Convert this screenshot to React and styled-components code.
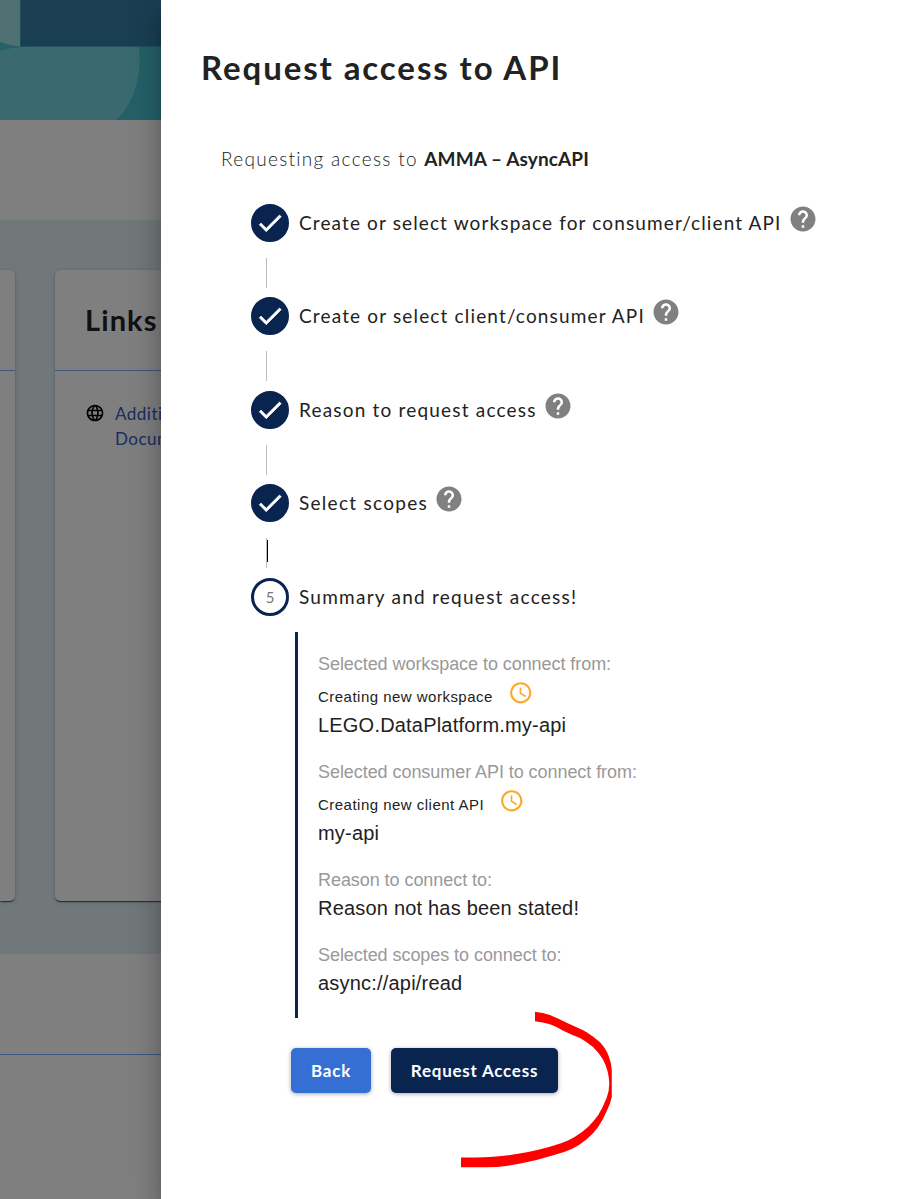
import React from "react";
import styled, { createGlobalStyle } from "styled-components";

const brandFont = '"Lato", "Open Sans", sans-serif';
const plainFont = '"Liberation Sans", Arial, sans-serif';
const navy = "#0a2450";

const GlobalStyle = createGlobalStyle`
  * { box-sizing: border-box; }
  body { margin: 0; background: #fff; font-family: ${brandFont}; color: #222; }
`;

const Screen = styled.div`
  position: relative;
  width: 907px;
  height: 1199px;
  overflow: hidden;
`;

/* Page behind the drawer */
const Page = styled.main`
  display: flex;
  flex-direction: column;
  height: 100%;
  background: #fff;
`;
const Banner = styled.svg`
  display: block;
  flex: none;
  width: 907px;
  height: 120px;
`;
const Band = styled.section`
  display: flex;
  gap: 40px;
  height: 734px;
  margin-top: 100px;
  padding: 50px 40px 53px 0;
  background: #e0f1f3;
`;
const Card = styled.article`
  flex: ${(p) => (p.$wide ? 1 : "none")};
  width: ${(p) => (p.$wide ? "auto" : "15px")};
  background: #fff;
  border-radius: ${(p) => (p.$wide ? "5px" : "0 5px 5px 0")};
  box-shadow: 0 2px 1px -1px rgba(0, 0, 0, 0.4), 0 1px 1px rgba(0, 0, 0, 0.3), 0 1px 4px rgba(0, 0, 0, 0.2);
`;
const CardHeader = styled.header`
  height: 101px;
  padding-top: 29px;
  border-bottom: 1px solid #78acff;
`;
const CardTitle = styled.h2`
  margin: 0 30px;
  font-size: 29px;
  line-height: 41px;
  font-weight: 700;
  letter-spacing: 1.1px;
`;
const LinkRow = styled.div`
  display: flex;
  gap: 10px;
  width: 190px;
  padding: 30px 0 0 30px;
`;
const PageLink = styled.a`
  font-size: 17px;
  line-height: 25px;
  font-weight: 400;
  letter-spacing: 0.5px;
  color: #345cc0;
`;
const GlobeIcon = styled.svg`
  flex: none;
  width: 20px;
  height: 20px;
  margin-top: 2px;
`;
const Footer = styled.footer`
  margin-top: 100px;
  border-top: 1px solid #78acff;
`;
const Backdrop = styled.div`
  position: absolute;
  inset: 0;
  background: rgba(0, 0, 0, 0.5);
`;

/* Drawer */
const Drawer = styled.aside`
  position: absolute;
  inset: 0 0 0 161px;
  padding: 44px 40px 0 40px;
  background: #fff;
  box-shadow: 0 8px 10px -5px rgba(0, 0, 0, 0.2), 0 16px 24px 2px rgba(0, 0, 0, 0.14),
    0 6px 30px 5px rgba(0, 0, 0, 0.12);
`;
const Title = styled.h1`
  margin: 0;
  font-size: 33px;
  line-height: 47px;
  font-weight: 700;
  letter-spacing: 1.9px;
  white-space: nowrap;
`;
const Intro = styled.p`
  margin: 53px 0 0 20px;
  font-size: 19px;
  line-height: 30px;
  font-weight: 300;
  letter-spacing: 1.3px;
  white-space: nowrap;
  color: #222;
`;
const IntroName = styled.b`
  font-weight: 700;
  letter-spacing: 0.1px;
`;
const Steps = styled.ol`
  list-style: none;
  margin: 29.7px 0 0;
  padding: 0 0 0 50px;
`;
const Step = styled.li`
  height: ${(p) => (p.$last ? "auto" : "93.5px")};
`;
const StepRow = styled.div`
  display: flex;
  align-items: center;
  height: 38px;
`;
const StepDisc = styled.span`
  display: flex;
  flex: none;
  align-items: center;
  justify-content: center;
  width: 38px;
  height: 38px;
  margin-right: 10px;
  border: 3px solid ${navy};
  border-radius: 50%;
  background: ${(p) => (p.$done ? navy : "#fff")};
  font-size: 15px;
  color: #777;
`;
const StepLabel = styled.span`
  font-size: 19px;
  line-height: 30px;
  letter-spacing: ${(p) => p.$spacing}px;
  white-space: nowrap;
`;
const Connector = styled.div`
  position: relative;
  width: 1px;
  height: 30px;
  margin: 16px 0 0 15px;
  background: #bdbdbd;
`;
const Caret = styled.span`
  position: absolute;
  left: 1px;
  top: 2px;
  width: 1px;
  height: 22px;
  background: #000;
`;
const Icon = styled.svg`
  display: block;
  flex: none;
  width: ${(p) => p.$size}px;
  height: ${(p) => p.$size}px;
  fill: ${(p) => p.$color};
`;
const CheckIcon = styled(Icon)`
  stroke: #fff;
  stroke-width: 0.5px;
`;
const HelpIcon = styled(Icon)`
  margin: 0 0 8px 6px;
`;

/* Summary */
const Summary = styled.section`
  display: flex;
  flex-direction: column;
  gap: 18px;
  height: 386px;
  margin: 16.3px 0 0 94px;
  padding: 18px 0 0 20px;
  border-left: 3px solid ${navy};
  font-family: ${plainFont};
  white-space: nowrap;
`;
const SummaryLabel = styled.div`
  height: 27px;
  font-size: 18px;
  line-height: 29px;
  letter-spacing: -0.06px;
  color: #999;
`;
const SummaryValue = styled.div`
  font-size: 20px;
  line-height: 30px;
  letter-spacing: 0.2px;
`;
const SummaryNote = styled.div`
  display: flex;
  align-items: center;
  gap: 15px;
  height: 33px;
  font-size: 15px;
  letter-spacing: 0.48px;
`;
const NoteText = styled.span`
  padding-top: 6px;
`;
const ClockIcon = styled(Icon)`
  margin-bottom: 1px;
`;
const Actions = styled.div`
  display: flex;
  gap: 20px;
  margin: 30px 0 0 90px;
`;
const Button = styled.button`
  width: ${(p) => p.$width}px;
  height: 45px;
  padding: 0;
  border: 0;
  border-radius: 5px;
  background: ${(p) => (p.$primary ? navy : "#356fd3")};
  box-shadow: 0 1px 4px rgba(0, 0, 0, 0.35);
  font: 700 17px ${brandFont};
  letter-spacing: 0.75px;
  color: #fff;
`;
const Scribble = styled.svg`
  position: absolute;
  left: 300px;
  top: 1011px;
  width: 151px;
  height: 157px;
`;

const CHECK = "M9 16.17 4.83 12l-1.42 1.41L9 19 21 7l-1.41-1.41z";
const HELP =
  "M12 2C6.48 2 2 6.48 2 12s4.48 10 10 10 10-4.48 10-10S17.52 2 12 2zm1 17h-2v-2h2v2zm2.07-7.75l-.9.92C13.45 12.9 13 13.5 13 15h-2v-.5c0-1.1.45-2.1 1.17-2.83l1.24-1.26c.37-.36.59-.86.59-1.41 0-1.1-.9-2-2-2s-2 .9-2 2H8c0-2.21 1.79-4 4-4s4 1.79 4 4c0 .88-.36 1.68-.93 2.25z";
const CLOCK =
  "M11.99 2C6.47 2 2 6.48 2 12s4.47 10 9.99 10C17.52 22 22 17.52 22 12S17.52 2 11.99 2zM12 20c-4.42 0-8-3.58-8-8s3.58-8 8-8 8 3.58 8 8-3.58 8-8 8zm.5-13H11v6l5.25 3.15.75-1.23-4.5-2.67z";
const GLOBE =
  "M11.99 2C6.47 2 2 6.48 2 12s4.47 10 9.99 10C17.52 22 22 17.52 22 12S17.52 2 11.99 2zm6.93 6h-2.95c-.32-1.25-.78-2.45-1.38-3.56 1.84.63 3.37 1.91 4.33 3.56zM12 4.04c.83 1.2 1.48 2.53 1.91 3.96h-3.82c.43-1.43 1.08-2.76 1.91-3.96zM4.26 14C4.1 13.36 4 12.69 4 12s.1-1.36.26-2h3.38c-.08.66-.14 1.32-.14 2s.06 1.34.14 2H4.26zm.82 2h2.95c.32 1.25.78 2.45 1.38 3.56-1.84-.63-3.37-1.9-4.33-3.56zm2.95-8H5.08c.96-1.66 2.49-2.93 4.33-3.56C8.81 5.55 8.35 6.75 8.03 8zM12 19.96c-.83-1.2-1.48-2.53-1.91-3.96h3.82c-.43 1.43-1.08 2.76-1.91 3.96zM14.34 14H9.66c-.09-.66-.16-1.32-.16-2s.07-1.35.16-2h4.68c.09.65.16 1.32.16 2s-.07 1.34-.16 2zm.25 5.56c.6-1.11 1.06-2.31 1.38-3.56h2.95c-.96 1.65-2.49 2.93-4.33 3.56zM16.36 14c.08-.66.14-1.32.14-2s-.06-1.34-.14-2h3.38c.16.64.26 1.31.26 2s-.1 1.36-.26 2h-3.38z";
const SCRIBBLE =
  "M535 1011.7Q543 1012.500 550 1015Q557 1018 566.700 1022.700L576 1027Q582 1029.500 586.700 1032.300Q594 1037 600 1042.300Q606 1049 608.300 1055Q611.500 1063 611.800 1070V1096.700Q610.500 1104 606.700 1111Q603 1120 598.300 1126.700Q594 1133 586.700 1139.300Q580 1145 571.700 1149Q564 1152.500 555 1154.700Q538 1160 521.700 1163.300Q503 1167.300 485 1167.300H461V1157.500H475Q497 1157.500 515 1154.300Q527 1152.500 538.300 1149.700Q550 1147 561.700 1143Q569 1140.500 575 1136.700Q582 1132.500 588.300 1126.700Q594 1121 598.300 1115Q603 1107 606.700 1097.700Q609.300 1091 609.300 1083Q609 1077 607.700 1071.700Q606 1065 602.700 1059Q599 1053 593.300 1047.300Q587 1042 580 1038Q572 1035 563.300 1030.700Q556 1026.500 550 1024.300Q543 1022.300 535 1021.300Z";

const steps = [
  { label: "Create or select workspace for consumer/client API", spacing: 1.13 },
  { label: "Create or select client/consumer API", spacing: 1.16 },
  { label: "Reason to request access", spacing: 1.19 },
  { label: "Select scopes", spacing: 1.28, caret: true },
];

const summary = [
  { label: "Selected workspace to connect from:", note: "Creating new workspace", value: "LEGO.DataPlatform.my-api" },
  { label: "Selected consumer API to connect from:", note: "Creating new client API", value: "my-api" },
  { label: "Reason to connect to:", value: "Reason not has been stated!" },
  { label: "Selected scopes to connect to:", value: "async://api/read" },
];

export default function App() {
  return (
    <Screen>
      <GlobalStyle />
      <Page>
        <Banner viewBox="0 0 907 120">
          <rect width="907" height="120" fill="#4ac0d0" />
          <path d="M0 51Q10 47 30 46.500H138.500C143 74 134 103 116 120H0Z" fill="#74d4de" />
          <path d="M0 0H20V46.500Q8 45 0 42Z" fill="#9ce0e6" />
          <rect x="20.500" width="887" height="46.500" fill="#347ea6" />
        </Banner>
        <Band>
          <Card>
            <CardHeader />
          </Card>
          <Card $wide>
            <CardHeader>
              <CardTitle>Links</CardTitle>
            </CardHeader>
            <LinkRow>
              <GlobeIcon viewBox="0 0 24 24">
                <path d={GLOBE} />
              </GlobeIcon>
              <PageLink>Additional Documentation</PageLink>
            </LinkRow>
          </Card>
        </Band>
        <Footer />
      </Page>
      <Backdrop />
      <Drawer>
        <Title>Request access to API</Title>
        <Intro>
          Requesting access to <IntroName>AMMA – AsyncAPI</IntroName>
        </Intro>
        <Steps>
          {steps.map((step) => (
            <Step key={step.label}>
              <StepRow>
                <StepDisc $done>
                  <CheckIcon $size={30} $color="#fff" viewBox="0 0 24 24">
                    <path d={CHECK} />
                  </CheckIcon>
                </StepDisc>
                <StepLabel $spacing={step.spacing}>{step.label}</StepLabel>
                <HelpIcon $size={30} $color="#808080" viewBox="0 0 24 24">
                  <path d={HELP} />
                </HelpIcon>
              </StepRow>
              <Connector>{step.caret && <Caret />}</Connector>
            </Step>
          ))}
          <Step $last>
            <StepRow>
              <StepDisc>5</StepDisc>
              <StepLabel $spacing={1.25}>Summary and request access!</StepLabel>
            </StepRow>
          </Step>
        </Steps>
        <Summary>
          {summary.map((item) => (
            <div key={item.label}>
              <SummaryLabel>{item.label}</SummaryLabel>
              {item.note && (
                <SummaryNote>
                  <NoteText>{item.note}</NoteText>
                  <ClockIcon $size={25.5} $color="#ffa726" viewBox="0 0 24 24">
                    <path d={CLOCK} />
                  </ClockIcon>
                </SummaryNote>
              )}
              <SummaryValue>{item.value}</SummaryValue>
            </div>
          ))}
        </Summary>
        <Actions>
          <Button $width={80}>Back</Button>
          <Button $width={167} $primary>
            Request Access
          </Button>
        </Actions>
        <Scribble viewBox="461 1011 151 157">
          <path fill="#f00" d={SCRIBBLE} />
        </Scribble>
      </Drawer>
    </Screen>
  );
}
